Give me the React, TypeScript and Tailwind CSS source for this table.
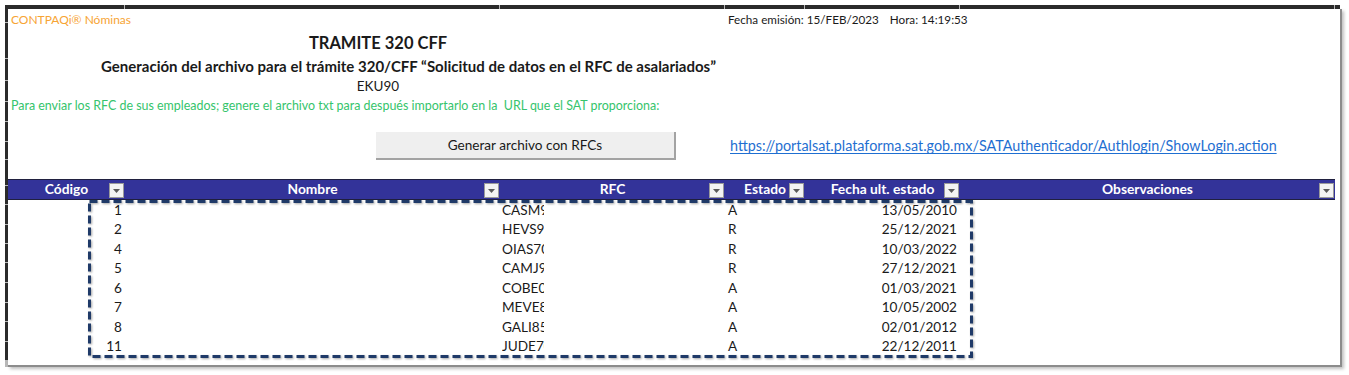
import React from 'react';

const topBand = ['w-[119px]', 'w-[374px]', 'w-[224px]', 'w-[79px]', 'w-[154px]', 'w-[374px]', 'w-[5px]'];
const leftBand = [
  'h-[13px]', 'h-[35px]', 'h-[21px]', 'h-[20px]', 'h-[19px]', 'h-[19px]', 'h-[17px]', 'h-[25px]',
  'h-[18px]', 'h-[19px]', 'h-[18px]', 'h-[18px]', 'h-[19px]', 'h-[19px]', 'h-[18px]', 'h-[19px]', 'h-[18px]',
];

interface Column {
  label: string;
  width: string;
}

const columns: Column[] = [
  { label: 'Código', width: 'w-[117px]' },
  { label: 'Nombre', width: 'w-[375px]' },
  { label: 'RFC', width: 'w-[225px]' },
  { label: 'Estado', width: 'w-[80px]' },
  { label: 'Fecha ult. estado', width: 'w-[155px]' },
  { label: 'Observaciones', width: 'w-[375px]' },
];

// RFCs are cut by the next cell, as in the sheet
const rows = [
  { code: '1', rfc: 'CASM9', estado: 'A', fecha: '13/05/2010' },
  { code: '2', rfc: 'HEVS9', estado: 'R', fecha: '25/12/2021' },
  { code: '4', rfc: 'OIAS70', estado: 'R', fecha: '10/03/2022' },
  { code: '5', rfc: 'CAMJ9', estado: 'R', fecha: '27/12/2021' },
  { code: '6', rfc: 'COBE0', estado: 'A', fecha: '01/03/2021' },
  { code: '7', rfc: 'MEVE8', estado: 'A', fecha: '10/05/2002' },
  { code: '8', rfc: 'GALI85', estado: 'A', fecha: '02/01/2012' },
  { code: '11', rfc: 'JUDE70', estado: 'A', fecha: '22/12/2011' },
];

function FilterButton() {
  return (
    <div className="absolute right-[1px] top-[3px] w-[15px] h-[15px] bg-[#f3f3f3] border border-[#9a9a9a] flex items-center justify-center">
      <svg width="7" height="4" viewBox="0 0 7 4">
        <path d="M0 0 H7 L3.5 4 Z" fill="#5a5a5a" />
      </svg>
    </div>
  );
}

export default function App() {
  return (
    <div className="w-[1349px] h-[375px] bg-white pl-[5px] pt-[5px] font-['Lato',sans-serif] text-[#1a1a1a] overflow-hidden">
      {/* cropped excel headers */}
      <div className="flex gap-[1px] h-[4px] w-[1335px] bg-[#b8b8b8]">
        {topBand.map((w, i) => (
          <div key={i} className={`${w} h-full bg-[#2b2b2b]`} />
        ))}
      </div>

      <div className="flex">
        <div className="flex flex-col gap-[1px] w-[3px] bg-[#b8b8b8] h-[358px]">
          {leftBand.map((h, i) => (
            <div key={i} className={`${h} w-full bg-[#2b2b2b]`} />
          ))}
        </div>

        <div className="w-[1334px] h-[358px] bg-white border-r-2 border-b-2 border-[#8c8c8c] shadow-[2px_2px_3px_rgba(0,0,0,0.25)] flex flex-col">
          <div className="h-[22px] flex items-center text-[11.7px]">
            <div className="w-[720px] pl-[3px] text-[12px] text-[#f7a434]">CONTPAQi® Nóminas</div>
            <span>Fecha emisión: 15/FEB/2023</span>
            <span className="ml-[11px]">Hora: 14:19:53</span>
          </div>

          <div className="h-[25px] w-[740px] flex items-center justify-center text-[16.5px] font-bold">
            TRAMITE 320 CFF
          </div>
          <div className="h-[20px] w-[801px] flex items-center justify-center text-[15px] font-bold">
            Generación del archivo para el trámite 320/CFF “Solicitud de datos en el RFC de asalariados”
          </div>
          <div className="h-[20px] w-[740px] flex items-center justify-center text-[13.5px]">EKU90</div>
          <div className="h-[20px] flex items-center pl-[3px] text-[12.45px] text-[#35c46c] whitespace-pre">
            Para enviar los RFC de sus empleados; genere el archivo txt para después importarlo en la  URL que el SAT proporciona:
          </div>

          <div className="h-[16px]" />

          <div className="h-[28px] flex items-center">
            <button className="ml-[368px] w-[300px] h-[28px] bg-[#efefef] border-r-2 border-b-2 border-[#a3a3a3] text-[13.6px] text-[#1a1a1a]">
              Generar archivo con RFCs
            </button>
            <a className="ml-[54px] text-[14.35px] text-[#1f6fd1] underline underline-offset-2">
              https://portalsat.plataforma.sat.gob.mx/SATAuthenticador/Authlogin/ShowLogin.action
            </a>
          </div>

          <div className="h-[19px]" />

          {/* table header */}
          <div className="flex h-[21px] w-[1327px] bg-[#333399] border-y border-[#20203f]">
            {columns.map((c) => (
              <div key={c.label} className={`${c.width} relative flex items-center justify-center text-white font-bold text-[13.8px]`}>
                {c.label}
                <FilterButton />
              </div>
            ))}
          </div>

          {/* table body */}
          <div className="relative">
            {rows.map((r) => (
              <div key={r.code} className="flex h-[19.5px] items-center text-[13.6px]">
                <div className="w-[117px] text-right pr-[3px]">{r.code}</div>
                <div className="w-[375px]" />
                <div className="w-[225px] pl-[2px]">
                  <div className="w-[42px] overflow-hidden whitespace-nowrap">{r.rfc}</div>
                </div>
                <div className="w-[80px] pl-[3px]">{r.estado}</div>
                <div className="w-[155px] text-right pr-[3px]">{r.fecha}</div>
                <div className="w-[375px]" />
              </div>
            ))}

            <svg
              className="absolute left-[80px] top-0 drop-shadow-[1px_1px_1px_rgba(0,0,0,0.35)]"
              width="885"
              height="158"
              viewBox="0 0 885 158"
            >
              <rect x="1.5" y="1.5" width="882" height="155" fill="none" stroke="#1f3a68" strokeWidth="3" strokeDasharray="8 4" />
            </svg>
          </div>
        </div>
      </div>
    </div>
  );
}
